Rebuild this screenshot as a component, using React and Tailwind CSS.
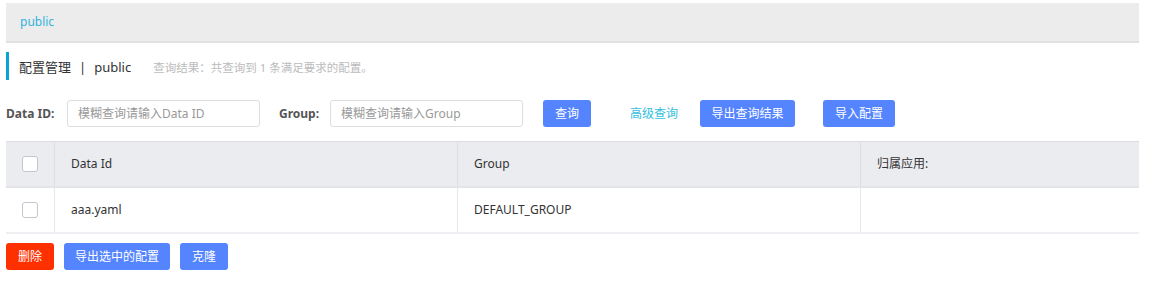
import React from "react";

const font = { fontFamily: '"Noto Sans", "Noto Sans CJK SC", sans-serif' };

function Checkbox() {
  return <div className="w-4 h-4 rounded-[3px] border border-[#c4c6cf] bg-white" />;
}

function Btn({ children, className = "" }) {
  return (
    <button
      className={`h-[27px] rounded-[3px] bg-[#5584ff] text-white text-[12px] whitespace-nowrap flex items-center justify-center ${className}`}
    >
      {children}
    </button>
  );
}

export default function App() {
  return (
    <div className="w-[1161px] h-[303px] bg-white text-[#333] text-[12px] pt-[3px]" style={font}>
      <div className="ml-[6px] w-[1133px] h-[40px] bg-[#ececec] border-b-2 border-[#e0e0e0] flex items-center pl-[14px]">
        <span className="text-[#33b2dd] text-[12px]">public</span>
      </div>

      <div className="ml-[6px] mt-[9px] h-[28px] flex items-center border-l-[3px] border-[#0aa3d4] pl-[10px] pt-[3px]">
        <span className="text-[13px] text-[#333]">配置管理</span>
        <span className="text-[13px] text-[#333] mx-[8px]">|</span>
        <span className="text-[13px] text-[#333]">public</span>
        <span className="ml-[22px] text-[11.5px] text-[#bbb]">查询结果：共查询到 1 条满足要求的配置。</span>
      </div>

      <div className="ml-[6px] mt-[20px] h-[27px] flex items-center">
        <span className="font-bold text-[12px] text-[#555] w-[61px]">Data ID:</span>
        <div className="w-[193px] h-[27px] border border-[#dcdee3] rounded-[3px] flex items-center px-[10px] text-[#999]">
          模糊查询请输入Data ID
        </div>
        <span className="font-bold text-[12px] text-[#555] ml-[19px] w-[51px]">Group:</span>
        <div className="w-[193px] h-[27px] border border-[#dcdee3] rounded-[3px] flex items-center px-[10px] text-[#999]">
          模糊查询请输入Group
        </div>
        <Btn className="ml-[20px] w-[48px]">查询</Btn>
        <span className="ml-[39px] text-[#33c0dc]">高级查询</span>
        <Btn className="ml-[22px] w-[95px]">导出查询结果</Btn>
        <Btn className="ml-[28px] w-[72px]">导入配置</Btn>
      </div>

      <div className="ml-[6px] mt-[14px] w-[1133px] border-t border-[#dcdee3]">
        <div className="grid grid-cols-[49px_403px_403px_278px] h-[46px] bg-[#ebecf0] border-b-2 border-[#e3e4e8]">
          <div className="flex items-center justify-center border-r border-[#dcdee3]"><Checkbox /></div>
          <div className="flex items-center pl-[16px] border-r border-[#dcdee3]">Data Id</div>
          <div className="flex items-center pl-[16px] border-r border-[#dcdee3]">Group</div>
          <div className="flex items-center pl-[16px]">归属应用:</div>
        </div>
        <div className="grid grid-cols-[49px_403px_403px_278px] h-[46px] bg-white border-b-2 border-[#eeeff3]">
          <div className="flex items-center justify-center border-r border-[#e6e7eb]"><Checkbox /></div>
          <div className="flex items-center pl-[16px] border-r border-[#e6e7eb]">aaa.yaml</div>
          <div className="flex items-center pl-[16px] border-r border-[#e6e7eb]">DEFAULT_GROUP</div>
          <div className="flex items-center pl-[16px]"></div>
        </div>
      </div>

      <div className="ml-[6px] mt-[9px] flex items-center gap-[10px]">
        <Btn className="w-[48px] bg-[#ff3000]">删除</Btn>
        <Btn className="w-[106px]">导出选中的配置</Btn>
        <Btn className="w-[48px]">克隆</Btn>
      </div>
    </div>
  );
}
